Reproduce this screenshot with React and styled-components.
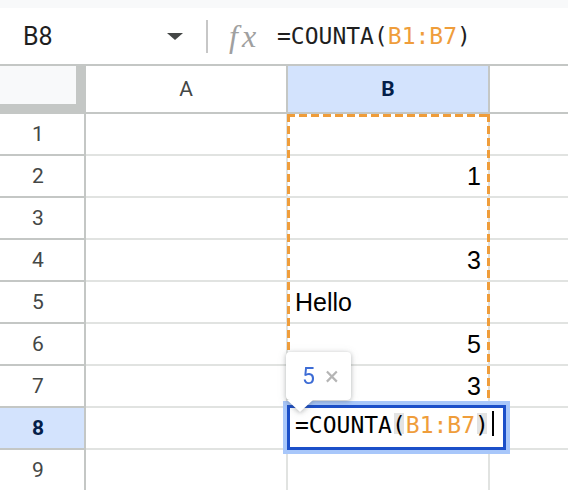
import React from 'react';
import styled, { createGlobalStyle } from 'styled-components';

const GlobalStyle = createGlobalStyle`
  html, body { margin: 0; padding: 0; background: #fff; overflow: hidden; }
  body { font-family: "Liberation Sans", Arial, sans-serif; }
`;

const ORANGE = '#ef9d3b';

const Page = styled.div`
  position: relative;
  width: 568px;
  height: 490px;
  overflow: hidden;
  background: #fff;
`;

const FormulaBar = styled.div`
  height: 56px;
  border-top: 8px solid #f8f9fa;
  border-bottom: 2px solid #c4c7c5;
  display: flex;
  align-items: center;
`;

const NameBox = styled.div`
  width: 206px;
  box-sizing: border-box;
  padding: 0 23px;
  display: flex;
  align-items: center;
  justify-content: space-between;
  font-family: Roboto, "Liberation Sans", sans-serif;
  font-size: 25px;
  color: #1f1f1f;
`;

const DropArrow = styled.span`
  width: 0;
  height: 0;
  border-left: 8px solid transparent;
  border-right: 8px solid transparent;
  border-top: 7px solid #444746;
`;

const Divider = styled.div`
  width: 2px;
  height: 33px;
  background: #c7c7c7;
`;

const FxIcon = styled.span`
  width: 30px;
  margin-left: 21px;
  font-family: "Liberation Serif", "DejaVu Serif", serif;
  font-style: italic;
  font-size: 32px;
  letter-spacing: 4px;
  color: #a0a0a0;
  line-height: 1;
`;

const FormulaText = styled.div`
  margin-left: 18px;
  font-family: "DejaVu Sans Mono", "Liberation Mono", monospace;
  font-size: 23px;
  color: #1f1f1f;
  white-space: pre;
`;

const Ref = styled.span`
  color: ${ORANGE};
`;

const Grid = styled.div`
  display: grid;
  grid-template-columns: 86px 202px 202px 1fr;
  grid-template-rows: 48px;
  grid-auto-rows: 42px;
`;

const Corner = styled.div`
  box-sizing: border-box;
  background: #f8f9fa;
  border-right: 10px solid #c4c7c5;
  border-bottom: 10px solid #c4c7c5;
`;

const ColHeader = styled.div`
  box-sizing: border-box;
  display: flex;
  align-items: center;
  justify-content: center;
  border-right: ${p => (p.$last ? 'none' : '2px solid #c4c7c5')};
  border-bottom: 2px solid #c4c7c5;
  background: ${p => (p.$active ? '#d3e3fd' : '#fff')};
  color: ${p => (p.$active ? '#041e49' : '#444746')};
  font-weight: ${p => (p.$active ? 700 : 400)};
  font-family: Roboto, "Liberation Sans", sans-serif;
  font-size: 21px;
`;

const RowHeader = styled.div`
  box-sizing: border-box;
  display: flex;
  align-items: center;
  justify-content: center;
  padding-right: 8px;
  border-right: 2px solid #c4c7c5;
  border-bottom: 2px solid #c4c7c5;
  background: ${p => (p.$active ? '#d3e3fd' : '#fff')};
  color: ${p => (p.$active ? '#041e49' : '#444746')};
  font-weight: ${p => (p.$active ? 700 : 400)};
  font-family: Roboto, "Liberation Sans", sans-serif;
  font-size: 21px;
`;

const Cell = styled.div`
  box-sizing: border-box;
  display: flex;
  align-items: flex-end;
  justify-content: ${p => (p.$right ? 'flex-end' : 'flex-start')};
  padding: 0 7px 5px;
  border-right: ${p => (p.$last ? 'none' : '2px solid #e1e3e1')};
  border-bottom: 2px solid #e1e3e1;
  font-family: "Liberation Sans", Arial, sans-serif;
  font-size: 25px;
  color: #000;
  white-space: nowrap;
  overflow: hidden;
`;

const dash = (dir) =>
  `repeating-linear-gradient(${dir}, ${ORANGE} 0 8px, transparent 8px 12px)`;

const DashedRange = styled.div`
  position: absolute;
  left: 287px;
  top: 114px;
  width: 203px;
  height: 292px;
  pointer-events: none;
  background:
    ${dash('90deg')} left top / 100% 3px no-repeat,
    ${dash('90deg')} left bottom / 100% 3px no-repeat,
    ${dash('180deg')} left top / 3px 100% no-repeat,
    ${dash('180deg')} right top / 3px 100% no-repeat;
`;

const Editor = styled.div`
  position: absolute;
  left: 287px;
  top: 405px;
  width: 219px;
  height: 45px;
  box-sizing: border-box;
  border: 3px solid #1b4fc9;
  box-shadow: 0 0 0 4px #a8c7fa;
  background: #fff;
  padding: 3px 0 0 5px;
  font-family: "DejaVu Sans Mono", "Liberation Mono", monospace;
  font-size: 23px;
  line-height: 27px;
  color: #000;
  white-space: pre;
`;

const Paren = styled.span`
  background: linear-gradient(#e3e3e3, #e3e3e3) 50% 18% / 10px 21px no-repeat;
`;

const Caret = styled.span`
  display: inline-block;
  width: 2px;
  height: 25px;
  margin-left: 3px;
  background: #000;
  vertical-align: -3px;
`;

const Tooltip = styled.div`
  position: absolute;
  left: 286px;
  top: 352px;
  width: 65px;
  height: 48px;
  box-sizing: border-box;
  padding-left: 16px;
  display: flex;
  align-items: center;
  gap: 10px;
  background: #fff;
  border-radius: 4px;
  filter: drop-shadow(0 1px 2px rgba(60, 64, 67, 0.3)) drop-shadow(0 1px 4px rgba(60, 64, 67, 0.12));
  font-family: Roboto, "Liberation Sans", sans-serif;
  &::after {
    content: '';
    position: absolute;
    left: 1px;
    top: 100%;
    width: 0;
    height: 0;
    border-left: 13px solid transparent;
    border-right: 13px solid transparent;
    border-top: 12px solid #fff;
  }
`;

const TipValue = styled.span`
  font-size: 23px;
  color: #3d6cd5;
`;

const TipClose = styled.span`
  font-size: 26px;
  color: #b5b5b5;
  line-height: 1;
`;

const colB = ['', '1', '', '3', 'Hello', '5', '3', '', ''];

export default function App() {
  return (
    <Page>
      <GlobalStyle />
      <FormulaBar>
        <NameBox>
          <span>B8</span>
          <DropArrow />
        </NameBox>
        <Divider />
        <FxIcon>fx</FxIcon>
        <FormulaText>
          =COUNTA(<Ref>B1:B7</Ref>)
        </FormulaText>
      </FormulaBar>
      <Grid>
        <Corner />
        <ColHeader>A</ColHeader>
        <ColHeader $active>B</ColHeader>
        <ColHeader $last />
        {colB.map((v, i) => {
          const isNum = v !== '' && !isNaN(Number(v));
          return (
            <React.Fragment key={i}>
              <RowHeader $active={i === 7}>{i + 1}</RowHeader>
              <Cell />
              <Cell $right={isNum}>{i === 7 ? '' : v}</Cell>
              <Cell $last />
            </React.Fragment>
          );
        })}
      </Grid>
      <DashedRange />
      <Editor>
        =COUNTA<Paren>(</Paren><Ref>B1:B7</Ref><Paren>)</Paren><Caret />
      </Editor>
      <Tooltip>
        <TipValue>5</TipValue>
        <TipClose>×</TipClose>
      </Tooltip>
    </Page>
  );
}
